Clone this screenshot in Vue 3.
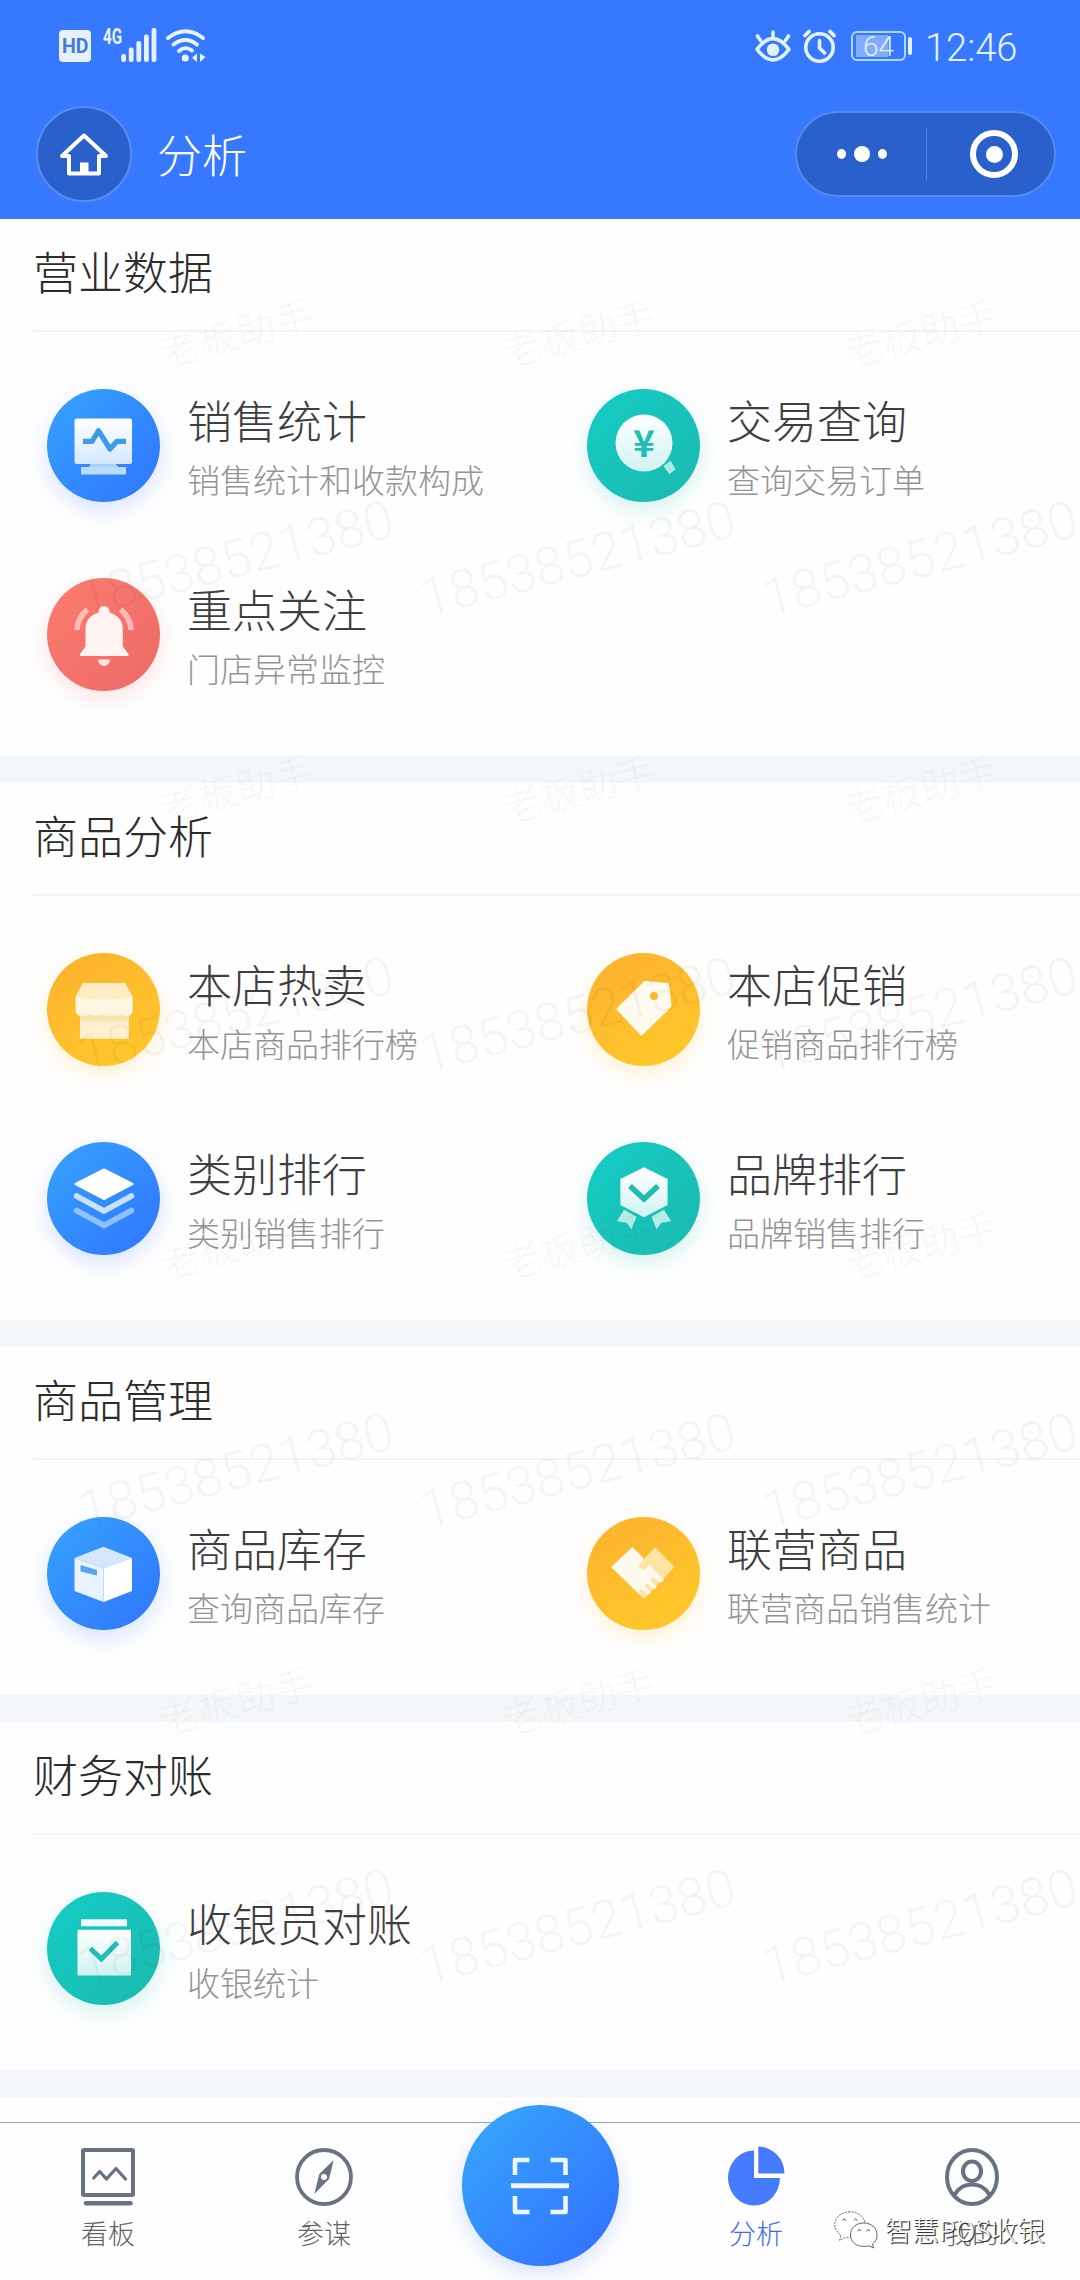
<script setup>
const sections = [
  {
    title: '营业数据',
    items: [
      { icon: 'monitor', tone: 'blue', name: '销售统计', desc: '销售统计和收款构成' },
      { icon: 'query', tone: 'teal', name: '交易查询', desc: '查询交易订单' },
      { icon: 'bell', tone: 'red', name: '重点关注', desc: '门店异常监控' }
    ]
  },
  {
    title: '商品分析',
    items: [
      { icon: 'store', tone: 'yellow', name: '本店热卖', desc: '本店商品排行榜' },
      { icon: 'tag', tone: 'yellow', name: '本店促销', desc: '促销商品排行榜' },
      { icon: 'layers', tone: 'blue', name: '类别排行', desc: '类别销售排行' },
      { icon: 'badge', tone: 'teal', name: '品牌排行', desc: '品牌销售排行' }
    ]
  },
  {
    title: '商品管理',
    items: [
      { icon: 'box', tone: 'blue', name: '商品库存', desc: '查询商品库存' },
      { icon: 'handshake', tone: 'yellow', name: '联营商品', desc: '联营商品销售统计' }
    ]
  },
  {
    title: '财务对账',
    items: [{ icon: 'calendar', tone: 'teal', name: '收银员对账', desc: '收银统计' }]
  }
]
</script>

<template>
  <div class="app">
    <header class="header">
      <div class="status">
        <div class="status-left">
          <svg width="32" height="32" viewBox="0 0 32 32">
            <rect width="32" height="32" rx="4" fill="#e6f1fd" />
            <text x="3" y="23.4" font-size="21" font-weight="700" textLength="26.5" lengthAdjust="spacingAndGlyphs" fill="#4479dd">HD</text>
          </svg>
          <svg class="signal" width="54" height="34" viewBox="0 0 54 34" fill="#e8f1ff">
            <text x="0" y="16" font-size="21.5" font-weight="700" textLength="19" lengthAdjust="spacingAndGlyphs">4G</text>
            <rect x="18.2" y="26" width="4.8" height="8" rx="2" />
            <rect x="25.8" y="19.5" width="4.8" height="14.5" rx="2" />
            <rect x="33.4" y="13" width="4.8" height="21" rx="2" />
            <rect x="41" y="6.5" width="4.8" height="27.5" rx="2" />
            <rect x="48.6" y="0" width="4.8" height="34" rx="2" />
          </svg>
          <svg class="wifi" width="40" height="34" viewBox="0 0 40 34" fill="none" stroke="#e6f5ff" stroke-width="3.8" stroke-linecap="round">
            <path d="M2 9Q19.5-4.500 37 9" />
            <path d="M7.500 15.500Q19.500 6.500 31 15.500" />
            <path d="M13 22Q19.500 16.500 26 21.500" />
            <circle cx="19.300" cy="29" r="3.500" fill="#e6f5ff" stroke="none" />
            <path d="M31 24.500V33L26 28.800ZM34 24.500V33L39.500 28Z" fill="#e6f5ff" stroke="none" />
          </svg>
        </div>
        <div class="status-right">
          <svg width="36" height="33" viewBox="0 0 36 33" fill="none" stroke="#ddf3ff" stroke-width="3.600" stroke-linecap="round">
            <path d="M2 20Q18-1.500 34 20Q18 41 2 20Z" transform="translate(0 -.6)" stroke-linejoin="round" />
            <circle cx="18" cy="19.800" r="6.300" fill="#e6f1ff" stroke="none" />
            <path d="M18 2V7M2.500 6L5.500 10.500M33.500 6L30.500 10.500" />
          </svg>
          <svg class="alarm" width="33" height="34" viewBox="0 0 33 34" fill="none" stroke="#e6f3ff" stroke-width="3.600" stroke-linecap="round" stroke-linejoin="round">
            <circle cx="16.500" cy="18.500" r="13.700" />
            <path d="M16.500 11.500V19L21.500 24M2 6.500L6 2.500M31 6.500L27 2.500" />
          </svg>
          <div class="battery"><span class="level"></span><span class="pct">64</span></div>
          <div class="cap"></div>
          <span class="clock">12:46</span>
        </div>
      </div>
      <div class="nav">
        <div class="home">
          <svg width="92" height="92" viewBox="2 2 92 92">
            <path d="M48 29.500L70 50H63V67.500H33V50H26Z" fill="none" stroke="#fff" stroke-width="4" stroke-linejoin="round" />
            <rect x="44" y="56.500" width="8.500" height="12" fill="#fff" />
          </svg>
        </div>
        <h1>分析</h1>
        <div class="capsule">
          <div class="dots"><i></i><i class="big"></i><i></i></div>
          <div class="split"></div>
          <div class="target"><i></i></div>
        </div>
      </div>
    </header>

    <main class="content">
      <section v-for="s in sections" :key="s.title" class="section">
        <h2>{{ s.title }}</h2>
        <div class="grid">
          <div v-for="it in s.items" :key="it.name" class="item">
            <div class="icon" :class="it.tone">
              <svg width="113" height="113" viewBox="0 0 113 113">
                <defs>
                  <linearGradient :id="'g-' + it.icon" x1="0" y1="0" x2="0" y2="1">
                    <stop offset="0" stop-color="#fff" />
                    <stop offset="1" stop-color="#fff" stop-opacity=".8" />
                  </linearGradient>
                </defs>
                <g v-if="it.icon === 'monitor'">
                  <path d="M44 75H69L72 79H41Z" fill="#a9d3fb" />
                  <rect x="34" y="78" width="45" height="7.500" fill="#b9dcfd" />
                  <rect x="27.500" y="29.500" width="57.500" height="45.500" rx="2" fill="url(#g-monitor)" />
                  <path d="M36 52.300H45L51.500 41.800L63 60L70 52.300H79" fill="none" stroke="#3d9bea" stroke-width="5.300" stroke-linejoin="round" />
                </g>
                <g v-else-if="it.icon === 'query'">
                  <path d="M76.500 77L83.700 71.700L88.500 80.300L82.300 85.300Z" fill="#a8ebe4" />
                  <circle cx="57" cy="54" r="28.500" fill="url(#g-query)" />
                  <text x="57" y="68" font-size="37" font-weight="700" text-anchor="middle" fill="#20bfb2">¥</text>
                </g>
                <g v-else-if="it.icon === 'bell'">
                  <path d="M33 78V76L38.500 68.500V51C38.500 42 44 36.500 51.500 34.500V33.500A5.500 5.500 0 0 1 62.500 33.500V34.500C70 36.500 75.800 42 75.800 51V68.500L81.500 76V78Z" fill="#fff4f1" />
                  <path d="M51 81.500H63A6 6.500 0 0 1 51 81.500Z" fill="#ffe3df" />
                  <path d="M40.500 31.500Q31 39 29.800 52M73.500 31.500Q83 39 84.200 52" fill="none" stroke="#fbbcb5" stroke-width="5.500" />
                </g>
                <g v-else-if="it.icon === 'store'">
                  <rect x="33" y="60" width="49" height="25.700" fill="#fff1cf" />
                  <rect x="33" y="62" width="49" height="6.500" fill="#fce3ae" />
                  <path d="M36 30H78L85.700 44V58Q85 63 80 63Q76 63 74 61Q71.500 64 68.500 62.500Q66 61 63 62.500Q60 64.500 57 62Q54 60.500 51 62.500Q48 64 45.500 61.500Q43 60.500 40.500 62Q29.500 65.500 28.500 58V44Z" fill="#fff6e2" />
                  <path d="M36 30H78L85 43Q80 49 74 44Q68 49 62.500 44Q57 49 51.500 44Q45 49 40 44Q35 48 29 43Z" fill="#fdecc4" />
                </g>
                <g v-else-if="it.icon === 'tag'">
                  <path d="M31 56L58 29.500L80.500 31.500L83 53L54.500 81Z" fill="#fffaf0" stroke="#fffaf0" stroke-width="3" stroke-linejoin="round" />
                  <circle cx="67" cy="43" r="4" fill="#fcb92d" />
                </g>
                <g v-else-if="it.icon === 'layers'" stroke-linejoin="round" stroke-linecap="round">
                  <path d="M57 27.500L85.500 42L57 57L28.500 42Z" fill="#fff" stroke="#fff" stroke-width="2" />
                  <path d="M29.500 54L57 69L84.500 54" fill="none" stroke="#c9e1ff" stroke-width="5.500" />
                  <path d="M29.500 68.500L57 83.500L84.500 68.500" fill="none" stroke="#8fc0ff" stroke-width="5.500" />
                </g>
                <g v-else-if="it.icon === 'badge'">
                  <path d="M37 67.700L49.500 74.700L44.500 87.300L39.600 80.700L30 79.300ZM77 67.700L64.500 74.700L69.500 87.300L74.400 80.700L84 79.300Z" fill="#b4ece6" />
                  <path d="M57 25.300L80.600 37V63L57 75.300L33.400 63V37Z" fill="url(#g-badge)" />
                  <path d="M43 44L57 57L71 44" fill="none" stroke="#1fbdb1" stroke-width="5.500" />
                </g>
                <g v-else-if="it.icon === 'box'">
                  <path d="M56.500 29.700L85 41L56.500 51L27.500 41Z" fill="#d5e7fd" />
                  <path d="M56.500 51L85 41V74L56.500 85Z" fill="#fff" />
                  <path d="M27.500 41L56.500 51V85L27.500 74Z" fill="#e9f2fe" />
                  <path d="M33.500 48L50 53V58.500L33.500 54.500Z" fill="#55a6f1" />
                </g>
                <g v-else-if="it.icon === 'handshake'">
                  <path d="M68 30L87.500 50L57 82L40 62L57 42Z" fill="#fde3a4" />
                  <path d="M24 50L45.500 30L57 41.500L51 49.500L56.500 53L63 48L77 63L73.500 66L66 60L63.500 63L70 69.500L67 72.500L60 66L57.500 69L64 75.500L61 78L54.500 72L52 75L56 81Z" fill="#fffaf0" />
                </g>
                <g v-else>
                  <rect x="34" y="27.300" width="46" height="7" fill="#f0fffd" />
                  <rect x="30.500" y="37.700" width="53.500" height="45.800" rx="1" fill="url(#g-calendar)" />
                  <path d="M43.500 56.500L54.400 67L70.500 50.500" fill="none" stroke="#20bfb2" stroke-width="5" />
                </g>
              </svg>
            </div>
            <div class="text">
              <div class="name">{{ it.name }}</div>
              <div class="desc">{{ it.desc }}</div>
            </div>
          </div>
        </div>
      </section>
    </main>

    <div class="watermarks">
      <div v-for="n in 12" :key="n" class="mark">
        <span class="brand">老板助手</span>
        <span class="phone">18538521380</span>
      </div>
    </div>

    <footer class="tabbar">
      <div class="tab">
        <svg width="54" height="58" viewBox="0 0 54 58" fill="none" stroke="#687281" stroke-linecap="round" stroke-linejoin="round">
          <rect x="2" y="2" width="50" height="45" rx="1" stroke-width="4" />
          <path d="M5 55.300H49.500" stroke-width="4.500" />
          <path d="M12.700 30L18.700 23.500L25.500 31L35 20.500L44.500 31" stroke-width="3.300" />
        </svg>
        <span>看板</span>
      </div>
      <div class="tab">
        <svg width="58" height="58" viewBox="0 0 58 58">
          <ellipse cx="29" cy="29" rx="27" ry="27" fill="none" stroke="#687281" stroke-width="3.800" />
          <path d="M38.700 12L34 31L19.300 46L24.300 26Z" fill="#687281" />
          <circle cx="29" cy="29" r="3" fill="#fff" />
        </svg>
        <span>参谋</span>
      </div>
      <div class="tab scan-tab">
        <div class="scan">
          <svg width="58" height="58" viewBox="0 0 58 58" fill="none" stroke="#eef6ff" stroke-width="4.600">
            <path d="M4 18V3H18.500M39.500 3H54.500V18M4 39V55H18.500M39.500 55H54.500V39" stroke-linejoin="round" />
            <path d="M0 28.700H58" stroke-width="5" />
          </svg>
        </div>
      </div>
      <div class="tab active">
        <svg width="57" height="60" viewBox="0 0 57 60" fill="#447bff">
          <path d="M26 4.500A26 27.500 0 1 0 52 32H26Z" />
          <path d="M30.300 .5A26.500 27 0 0 1 56.500 27.500H30.300Z" />
        </svg>
        <span>分析</span>
      </div>
      <div class="tab">
        <svg width="54" height="58" viewBox="0 0 54 58" fill="none" stroke="#687281" stroke-width="4">
          <ellipse cx="27" cy="29" rx="25" ry="27" />
          <ellipse cx="27" cy="23.300" rx="9" ry="9.700" />
          <path d="M9.500 47Q15 36.500 27 36.500T44.500 47" />
        </svg>
        <span>我的</span>
      </div>
    </footer>

    <div class="account">
      <svg width="44" height="38" viewBox="0 0 44 38" fill="#fff" stroke="#555" stroke-width=".9">
        <path d="M16 .8C7.500.8.700 6.500.700 13.500C.700 18 3 21.500 7 24L5.500 29.500L11.500 26.300Q15 27 18 26.300L31 12C30 5.500 23.500.8 16 .8Z" stroke-dasharray="2 1.200" />
        <path d="M29.700 12C22 12 16.500 17 16.500 24C16.500 31 22.500 35.500 29.700 35.500Q32.500 35.500 35 34.800L39.700 37L38.500 33C41.500 31 43 27.500 43 24C43 17 37.500 12 29.700 12Z" />
        <path d="M8.500 9.500Q10 6.500 12 9.500M20 9.500Q21.500 6.500 23.500 9.500M23.500 20Q25 17 27 20M32.500 20Q34 17 36 20" fill="none" stroke="#333" />
      </svg>
      <span>智慧POS收银</span>
    </div>
  </div>
</template>

<style>
body {
  margin: 0;
  background: #fefefe;
}
</style>

<style scoped>
.app {
  position: relative;
  display: flex;
  flex-direction: column;
  width: 1080px;
  height: 2280px;
  overflow: hidden;
  background: #fefefe;
  font-family: 'Noto Sans CJK SC', sans-serif;
  font-weight: 300;
}
h1,
h2 {
  margin: 0;
  font-weight: 300;
}
svg {
  display: block;
  flex: none;
}

.header {
  height: 219px;
  flex: none;
  background: #3678ff;
  color: #fff;
}
.status {
  display: flex;
  justify-content: space-between;
  height: 92px;
  padding: 0 61px 0 59px;
  align-items: center;
}
.status-left,
.status-right {
  display: flex;
  align-items: center;
}
.status-left svg {
  font-family: Roboto, sans-serif;
}
.signal {
  margin: 0 9px 2px 12px;
}
.alarm {
  margin: 0 15px 0 12px;
}
.battery {
  position: relative;
  box-sizing: border-box;
  width: 55px;
  height: 30px;
  border: 2px solid #a9dcff;
  border-radius: 6px;
  font: 300 28px/27px Roboto, sans-serif;
  text-align: center;
  color: #e4f2ff;
}
.level {
  position: absolute;
  left: 3px;
  top: 2px;
  width: 32px;
  height: 22px;
  background: rgba(255, 255, 255, 0.38);
}
.pct {
  position: relative;
}
.cap {
  width: 4px;
  height: 18px;
  margin: 0 13px 0 2px;
  border-radius: 2px;
  background: #e0f2ff;
}
.clock {
  width: 94px;
  font: 300 38px/44px Roboto, sans-serif;
  color: #e4f4ff;
  padding-top: 4px;
}
.nav {
  display: flex;
  align-items: center;
  height: 124px;
  padding: 0 24px 0 36px;
}
.home {
  box-sizing: border-box;
  width: 96px;
  height: 96px;
  border: 2px solid #5b8df0;
  border-radius: 50%;
  background: #2960cb;
}
.nav h1 {
  margin-left: 25px;
  font-size: 45px;
  line-height: 60px;
}
.capsule {
  display: flex;
  align-items: center;
  box-sizing: border-box;
  width: 261px;
  height: 86px;
  margin-left: auto;
  border: 2px solid #5489ee;
  border-radius: 43px;
  background: #2960cb;
}
.dots {
  display: flex;
  flex: 1;
  align-items: center;
  justify-content: center;
  gap: 8px;
}
.dots i {
  width: 9px;
  height: 10px;
  border-radius: 50%;
  background: #fff;
}
.dots .big {
  width: 16px;
  height: 16px;
}
.split {
  width: 1px;
  height: 52px;
  background: #5284e6;
}
.target {
  display: flex;
  align-items: center;
  justify-content: center;
  box-sizing: border-box;
  width: 48px;
  height: 48px;
  margin: 0 36px 0 43px;
  border: 6px solid #fff;
  border-radius: 50%;
}
.target i {
  width: 17px;
  height: 17px;
  border-radius: 50%;
  background: #fff;
}

.content {
  flex: 1;
  min-height: 0;
}
.section {
  border-bottom: 27px solid #f4f7f9;
}
.section h2 {
  height: 111px;
  margin-left: 33px;
  border-bottom: 2px solid #f4f4f4;
  font-size: 45px;
  line-height: 104px;
  color: #2c2c2c;
}
.grid {
  display: grid;
  grid-template-columns: 540px 540px;
  grid-auto-rows: 189px;
  padding: 19px 0 27px;
}
.item {
  display: flex;
  align-items: center;
  padding-left: 47px;
}
.icon {
  width: 113px;
  height: 113px;
  flex: none;
  border-radius: 50%;
}
.icon svg {
  font-family: 'Noto Sans CJK SC', sans-serif;
}
.blue {
  background: linear-gradient(135deg, #359ffc 10%, #3079ff 90%);
  box-shadow: 0 8px 22px rgba(60, 120, 255, 0.2);
}
.teal {
  background: linear-gradient(135deg, #14cbc4 10%, #1bbbb0 90%);
  box-shadow: 0 8px 22px rgba(30, 190, 180, 0.18);
}
.red {
  background: linear-gradient(135deg, #fb7a6e 10%, #ee6c68 90%);
  box-shadow: 0 8px 22px rgba(245, 110, 110, 0.18);
}
.yellow {
  background: linear-gradient(150deg, #fdb32e 10%, #fec82a 90%);
  box-shadow: 0 8px 22px rgba(255, 190, 50, 0.2);
}
.text {
  margin-left: 27px;
  white-space: nowrap;
}
.name {
  font-size: 45px;
  line-height: 66px;
  color: #3e3e40;
}
.desc {
  font-size: 33px;
  line-height: 52px;
  color: #949494;
}

/* Tiled security watermark drawn over the list */
.watermarks {
  position: absolute;
  left: 65px;
  top: 217px;
  display: grid;
  grid-template-columns: repeat(3, 342px);
  grid-auto-rows: 456px;
  color: rgba(0, 0, 0, 0.04);
  pointer-events: none;
}
.mark {
  display: flex;
  flex-direction: column;
}
.mark span {
  display: flex;
  align-items: center;
  justify-content: center;
  height: 228px;
  transform: rotate(-14.6deg);
  white-space: nowrap;
}
.brand {
  font-size: 39px;
}
.phone {
  font-family: Roboto, sans-serif;
  font-size: 53px;
}

.tabbar {
  position: relative;
  display: flex;
  box-sizing: border-box;
  height: 158px;
  flex: none;
  border-top: 1px solid #a2a2a2;
  background: #fefefe;
}
.tab {
  display: flex;
  flex: 1;
  flex-direction: column;
  align-items: center;
  justify-content: flex-end;
  height: 129px;
  color: #606468;
}
.tab span {
  margin-top: 7px;
  font-size: 27px;
  line-height: 39px;
}
.active {
  color: #3d6cf0;
}
.scan-tab {
  justify-content: flex-start;
}
.scan {
  display: flex;
  align-items: center;
  justify-content: center;
  width: 157px;
  height: 161px;
  flex: none;
  margin-top: -18px;
  border-radius: 50%;
  background: linear-gradient(135deg, #36a3fc 10%, #3276ff 85%);
  box-shadow: 0 8px 22px rgba(60, 120, 255, 0.2);
}

/* Publisher signature laid over the bottom-right corner */
.account {
  position: absolute;
  left: 834px;
  top: 2211px;
  display: flex;
  gap: 7px;
  font-size: 27px;
  line-height: 38px;
  color: #fff;
  text-shadow: 1px 1px 1px #333, 1px 1px 0 #555;
  white-space: nowrap;
}
</style>
